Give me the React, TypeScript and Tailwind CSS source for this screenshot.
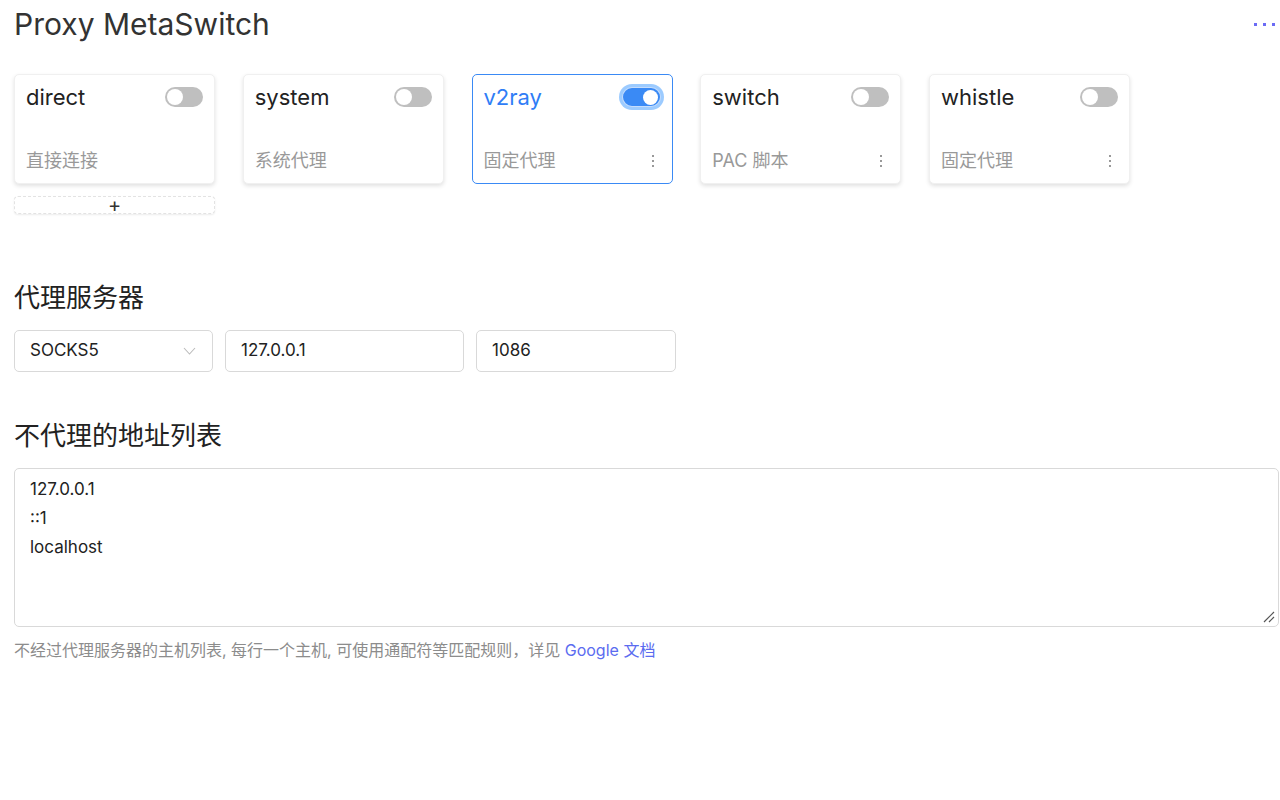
import React from 'react';

const proxies = [
    { name: 'direct', desc: '直接连接', on: false, menu: false },
    { name: 'system', desc: '系统代理', on: false, menu: false },
    { name: 'v2ray', desc: '固定代理', on: true, menu: true },
    { name: 'switch', desc: 'PAC 脚本', on: false, menu: true },
    { name: 'whistle', desc: '固定代理', on: false, menu: true },
];

const font = { fontFamily: '"Inter", "Noto Sans CJK SC", sans-serif' };

const Toggle: React.FC<{ on: boolean }> = ({ on }) => {
    if (on) {
        return (
            <div className="rounded-full p-[3px] bg-[#9ccbff] -mr-[3px]">
                <div className="w-[39px] h-[20px] rounded-full bg-[#3a8af5] border border-white/70 flex items-center justify-end pr-[2px]">
                    <div className="w-[15px] h-[15px] rounded-full bg-white" />
                </div>
            </div>
        );
    }
    return (
        <div className="w-[38px] h-[20px] rounded-full bg-[#bfbfbf] flex items-center pl-[2px]">
            <div className="w-[16px] h-[16px] rounded-full bg-white" />
        </div>
    );
};

const App: React.FC = () => {
    return (
        <div className="min-h-[800px] bg-white text-[#333] pl-[14px] pr-[1px]" style={font}>
            <div className="flex items-center justify-between h-[48px]">
                <h1 className="text-[30px] leading-none text-[#333]">Proxy MetaSwitch</h1>
                <div className="flex gap-[6px] pr-[4px] pt-[1px]">
                    <span className="w-[3px] h-[3px] bg-[#6b6bf5]" />
                    <span className="w-[3px] h-[3px] bg-[#6b6bf5]" />
                    <span className="w-[3px] h-[3px] bg-[#6b6bf5]" />
                </div>
            </div>

            <div className="mt-[26px] flex gap-[27.75px]">
                {proxies.map((p, i) => (
                    <div key={p.name} className="w-[201px] flex flex-col gap-[13px]">
                        <div
                            className={`h-[110px] rounded-[5px] bg-white flex flex-col justify-between pl-[11px] pr-[11px] pt-[8px] pb-[9px] ${
                                p.on
                                    ? 'border border-[#3a8af5]'
                                    : 'border border-[#f0f0f0] shadow-[0_2px_4px_rgba(0,0,0,0.12)]'
                            }`}
                        >
                            <div className="flex items-center justify-between">
                                <span className={`text-[22px] leading-[28px] ${p.on ? 'text-[#2f7df6]' : 'text-[#222]'}`}>{p.name}</span>
                                <Toggle on={p.on} />
                            </div>
                            <div className="flex items-center justify-between">
                                <span className="text-[18px] leading-[26px] text-[#999]">{p.desc}</span>
                                {p.menu && (
                                    <div className="flex flex-col gap-[3px] pr-[7px]">
                                        <span className="w-[2px] h-[2px] bg-[#999]" />
                                        <span className="w-[2px] h-[2px] bg-[#999]" />
                                        <span className="w-[2px] h-[2px] bg-[#999]" />
                                    </div>
                                )}
                            </div>
                        </div>
                        {i === 0 && (
                            <div className="h-[18px] -mt-[1px] rounded-[4px] border border-dashed border-[#e3e3e3] shadow-[0_1px_2px_rgba(0,0,0,0.08)] flex items-center justify-center text-[20px] leading-none text-[#333]">
                                +
                            </div>
                        )}
                    </div>
                ))}
            </div>

            <h2 className="mt-[67px] text-[26px] leading-[34px] text-[#222]">代理服务器</h2>
            <div className="mt-[15px] flex gap-[12px]">
                <div className="w-[199px] h-[42px] rounded-[5px] border border-[#d9d9d9] flex items-center justify-between pl-[15px] pr-[16px] text-[17px] text-[#222]">
                    <span>SOCKS5</span>
                    <svg width="13" height="8" viewBox="0 0 13 8" fill="none" stroke="#bbb" strokeWidth="1.1">
                        <path d="M1 1l5.5 6L12 1" />
                    </svg>
                </div>
                <div className="w-[239px] h-[42px] rounded-[5px] border border-[#d9d9d9] flex items-center px-[15px] text-[17px] text-[#222]">127.0.0.1</div>
                <div className="w-[200px] h-[42px] rounded-[5px] border border-[#d9d9d9] flex items-center px-[15px] text-[17px] text-[#222]">1086</div>
            </div>

            <h2 className="mt-[47px] text-[26px] leading-[34px] text-[#222]">不代理的地址列表</h2>
            <div className="mt-[15px] relative h-[159px] rounded-[5px] border border-[#d9d9d9] px-[15px] pt-[6px] text-[17px] leading-[29px] text-[#222]">
                <div>127.0.0.1</div>
                <div>::1</div>
                <div>localhost</div>
                <svg className="absolute right-[2px] bottom-[2px]" width="14" height="14" viewBox="0 0 14 14" stroke="#555" strokeWidth="1.2">
                    <path d="M2 12L12 2M7 12L12 7" />
                </svg>
            </div>
            <p className="mt-[11px] text-[16px] leading-[24px] text-[#8c8c8c]">
                不经过代理服务器的主机列表, 每行一个主机, 可使用通配符等匹配规则，详见 <span className="text-[#5b6cf0]">Google 文档</span>
            </p>
        </div>
    );
};

export default App;
